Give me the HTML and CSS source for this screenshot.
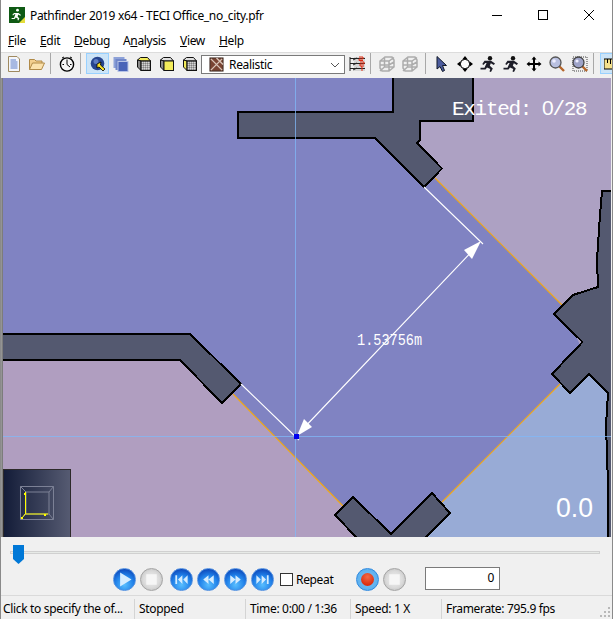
FILE: index.html
```html
<!DOCTYPE html>
<html lang="en">
<head>
<meta charset="utf-8">
<title>Pathfinder 2019 x64 - TECI Office_no_city.pfr</title>
<link rel="stylesheet" href="styles.css">
</head>
<body>
<svg class="defs" aria-hidden="true">
  <defs>
    <pattern id="dither" width="2" height="2" patternUnits="userSpaceOnUse">
      <rect width="2" height="2" fill="#a8a8a8"/>
      <rect width="1" height="1" fill="#d4d4d4"/>
      <rect x="1" y="1" width="1" height="1" fill="#808080"/>
    </pattern>
    <symbol id="wire" viewBox="0 0 16 16">
      <path d="M1 5 L6 1 H13 L15 4 V11 L10 15 H3 L1 12 Z M1 5 H10 L15 1.500 M10 5 V15 M5.500 1 V11 L1 15 M5.500 11 H15 M1 9 L10 9 L15 6" fill="none" stroke="#acacac" stroke-width="1.500"/>
    </symbol>
    <symbol id="runner" viewBox="0 0 16 16">
      <circle cx="10" cy="2.200" r="2.200" fill="#111"/>
      <path d="M4.500 4.800 H11 L15 7.500 L13.800 9 L10.800 7.300 L9.800 9.800 L12.800 12.500 L11 16 L9.500 15.500 L10.300 13 L7 11.400 L5.500 13.500 H.5 V11.800 H4.500 L6.600 7 H5.400 L3.300 9 L2.300 8 Z" fill="#1d1d28"/>
    </symbol>
  </defs>
</svg>
<div class="window">
  <header class="titlebar">
    <svg class="app-icon" viewBox="0 0 16 16">
      <rect width="16" height="16" fill="#0f5a14"/>
      <circle cx="8.500" cy="3.200" r="1.400" fill="#fff"/>
      <path d="M5 6 H9.500 L12 8 L11.200 8.800 L9.300 7.600 L8.600 9.600 L10.400 11.500 L9.300 13.500 L8.400 13 L8.900 11.800 L6.800 10.500 L5.600 12 H2.600 V11 H5 L6.400 7.200 H5.400 L4 8.600 L3.400 7.800 Z" fill="#fff"/>
      <path d="M16 10 V16 H10 Z" fill="#e4dc3a"/>
    </svg>
    <span class="title-text">Pathfinder 2019 x64 - TECI Office_no_city.pfr</span>
    <div class="caption-buttons">
      <svg class="caption" viewBox="0 0 46 30"><path d="M18 15.500 H28" stroke="#000" fill="none"/></svg>
      <svg class="caption" viewBox="0 0 46 30"><rect x="18.500" y="10.500" width="9" height="9" stroke="#000" fill="none"/></svg>
      <svg class="caption" viewBox="0 0 46 30"><path d="M18 10 L28 20 M28 10 L18 20" stroke="#000" fill="none"/></svg>
    </div>
  </header>

  <nav class="menubar">
    <span class="menu menu-file"><u>F</u>ile</span>
    <span class="menu menu-edit"><u>E</u>dit</span>
    <span class="menu menu-debug"><u>D</u>ebug</span>
    <span class="menu menu-analysis">A<u>n</u>alysis</span>
    <span class="menu menu-view"><u>V</u>iew</span>
    <span class="menu menu-help"><u>H</u>elp</span>
  </nav>

  <div class="toolbar">
    <span class="tool"><svg class="ico" viewBox="0 0 16 16"><path d="M2.500 .5 H11 L13.500 3 V15.500 H2.500 Z" fill="#f4f6fb" stroke="#a08a60"/><path d="M4.500 4 H10 M4.500 6 H11.500 M4.500 8 H11.500 M4.500 10 H11.500 M4.500 12 H11.500" stroke="#5a7cc8"/></svg></span>
    <span class="tool"><svg class="ico" viewBox="0 0 16 16"><path d="M.5 13.500 V3.500 H5.500 L7 5 H13 V7" fill="#f3cf8e" stroke="#b08a48"/><path d="M.5 13.500 L3.500 7 H15.500 L12.500 13.500 Z" fill="#fbe2ad" stroke="#b08a48"/></svg></span>
    <span class="sep"></span>
    <span class="tool"><svg class="ico" viewBox="0 0 16 16"><circle cx="8" cy="8.500" r="6.600" fill="#f5f5f5" stroke="#000" stroke-width="1.400"/><path d="M8 3.500 V8.500 L11 11 M3.500 8.500 H5 M11 8.500 H12.500" stroke="#000" fill="none"/><path d="M3 2 L5 1 M13 2 L11 1" stroke="#000"/></svg></span>
    <span class="sep"></span>
    <span class="tool tool-on tool-first-mode"><svg class="ico" viewBox="0 0 16 16"><circle cx="7.500" cy="7.500" r="6.800" fill="#26458f"/><circle cx="6" cy="5.500" r="2.500" fill="#5c7bc4"/><path d="M7 8 L11 6 L10.500 9 L15 13 L13 15 L9 11 L7 12 Z" fill="#f7e22b" stroke="#000" stroke-width=".8"/></svg></span>
    <span class="tool"><svg class="ico" viewBox="0 0 16 16"><rect x=".5" y="1" width="11" height="11" fill="#8ea2d8"/><rect x="2.500" y="3" width="11" height="11" fill="#7187c9"/><rect x="5" y="5.500" width="10" height="10" fill="#4a64b8" stroke="#b8c4e6"/></svg></span>
    <span class="tool"><svg class="ico" viewBox="0 0 16 16"><path class="face-yellow" d="M1.500 4 L4.500 1.500 H11.500 L14.500 5 H5 Z"/><path class="face-dark" d="M1.500 4 L5 5 V14.500 L1.500 11 Z"/><rect class="face-grey" x="5" y="5" width="9.500" height="9.500"/></svg></span>
    <span class="tool"><svg class="ico" viewBox="0 0 16 16"><path class="face-light" d="M1.500 4 L4.500 1.500 H11.500 L14.500 5 H5 Z"/><path class="face-dark" d="M1.500 4 L5 5 V14.500 L1.500 11 Z"/><rect class="face-yellow" x="5" y="5" width="9.500" height="9.500"/></svg></span>
    <span class="tool"><svg class="ico" viewBox="0 0 16 16"><path class="face-light" d="M1.500 4 L4.500 1.500 H11.500 L14.500 5 H5 Z"/><path class="face-yellow" d="M1.500 4 L5 5 V14.500 L1.500 11 Z"/><rect class="face-grey" x="5" y="5" width="9.500" height="9.500"/></svg></span>
    <div class="combo">
      <svg class="combo-ico" viewBox="0 0 16 16"><rect x="1" y="1" width="14" height="14" fill="#7a4433" stroke="#3a2a22"/><path d="M2 2 L14 14 M14 2 L2 14 M8 1 L15 8" stroke="#d9c4b8" stroke-width="1.500"/></svg>
      <span class="combo-text">Realistic</span>
      <svg class="combo-arrow" viewBox="0 0 10 6"><path d="M1 1 L5 5 L9 1" fill="none" stroke="#555"/></svg>
    </div>
    <span class="tool"><svg class="ico" viewBox="0 0 16 16"><rect x="5" y="1" width="11" height="14" fill="#d6d6d6"/><path d="M1 2.500 H16 M1 7.500 H16 M1 12.500 H16 M1 1 V15 M4 4 L8 2 M4 9 L8 7 M4 14 L8 12" stroke="#222" fill="none"/><path d="M10 1 H14 V3 H10 V4.500 H14 M11 6 H15 V8 H11 V10 H15 M12 11 L13 10.500 V15" stroke="#e02a10" fill="none"/></svg></span>
    <span class="sep"></span>
    <span class="tool"><svg class="ico"><use href="#wire"/></svg></span>
    <span class="tool"><svg class="ico"><use href="#wire"/></svg></span>
    <span class="sep sep-wide"></span>
    <span class="tool"><svg class="ico" viewBox="0 0 16 16"><path d="M3 .5 V13 L6 10.500 L8.500 15.500 L10.500 14.500 L8.500 9.500 L12.500 9.500 Z" fill="#4c5c9e" stroke="#101828"/></svg></span>
    <span class="tool"><svg class="ico" viewBox="0 0 16 16"><rect x="3.500" y="3.500" width="9" height="9" rx="4" fill="#fff" stroke="#000"/><path d="M8 0 L10.800 3.500 H5.200 Z M8 16 L10.800 12.500 H5.200 Z M0 8 L3.500 5.200 V10.800 Z M16 8 L12.500 5.200 V10.800 Z" fill="#000"/></svg></span>
    <span class="tool"><svg class="ico"><use href="#runner"/></svg></span>
    <span class="tool"><svg class="ico"><use href="#runner"/></svg></span>
    <span class="tool"><svg class="ico" viewBox="0 0 16 16"><path d="M8 .5 L10.500 3.500 H9 V7 H12.500 V5.500 L15.500 8 L12.500 10.500 V9 H9 V12.500 H10.500 L8 15.500 L5.500 12.500 H7 V9 H3.500 V10.500 L.5 8 L3.500 5.500 V7 H7 V3.500 H5.500 Z" fill="#000"/></svg></span>
    <span class="tool"><svg class="ico" viewBox="0 0 16 16"><path d="M10 10 L15 15" stroke="#b5652a" stroke-width="2.400"/><circle cx="6.500" cy="6.500" r="5.500" fill="#b9c0e0" stroke="#555" stroke-width="1.300"/><circle cx="5" cy="5" r="1.800" fill="#eef"/></svg></span>
    <span class="tool"><svg class="ico" viewBox="0 0 16 16"><rect x="1" y="1" width="14" height="14" fill="none" stroke="#444" stroke-dasharray="1 1"/><path d="M10 10 L15 15" stroke="#b5652a" stroke-width="2.400"/><circle cx="6.500" cy="6.500" r="5.500" fill="#9ea3c8" stroke="#444" stroke-width="1.300"/><circle cx="5" cy="5" r="1.600" fill="#eef"/></svg></span>
    <span class="sep"></span>
    <span class="tool tool-on tool-last"><svg class="ico" viewBox="0 0 16 16"><rect x="0" y="3" width="18" height="10" fill="#f3e08c" stroke="#000"/><path d="M3.500 3 V7 M6.500 3 V8 M9.500 3 V7 M12.500 3 V8" stroke="#000"/></svg></span>
  </div>

  <main class="viewport">
    <svg class="scene" viewBox="3 78 608 459" preserveAspectRatio="none">
      <defs>
        <linearGradient id="axisbg" x1="0" x2="1" y1="0" y2="0">
          <stop offset="0" stop-color="#131c38"/>
          <stop offset="1" stop-color="#565b72"/>
        </linearGradient>
      </defs>
      <rect class="room-lilac" x="3" y="78" width="608" height="459"/>
      <polygon class="room-mauve" points="3,360 180,360 233,394 343,506 356,537 3,537"/>
      <polygon class="room-blue" points="442,502 560,384 590,374 611,393 611,537 426,537"/>
      <polygon class="room-purple" points="3,78 393,78 393,140 435,178 563,306 580,345 560,384 442,502 426,537 356,537 343,506 233,394 225,400 180,360 3,360"/>
      <path class="door" d="M435 178 L563 306 M233 394 L343 506 M442 502 L560 384"/>
      <polygon class="wall" points="393,76 393,112 238,112 238,138 375,138 424,187 442,168.500 417,143 420,140 420,121 473,121 473,76"/>
      <polygon class="wall" points="1,334 190,334 241,384 222,403 180,360 1,360"/>
      <polygon class="wall" points="335,515 353,497 391,534 432,493 450,513 424,539 358,539"/>
      <polygon class="wall" points="613,191 602,191 600,215 597,260 598,287 573,295 554,314 582.500,342 552,374 570,393 589,374 608,393 606,425 608,485 608,539 613,539"/>
      <path class="guide" d="M295.500 78 V537 M3 436.500 H611"/>
      <path class="dim" d="M241 384 L299 440 M424 187 L483 244 M300 432 L478 245"/>
      <polygon class="arrow" points="297,436 304,419 312,427"/>
      <polygon class="arrow" points="481,241 464,250 472,259"/>
      <rect class="pick" x="294" y="434" width="5" height="5"/>
      <text class="label" x="452" y="115">Exited:</text>
      <text class="label" x="542" y="115"><tspan class="plain-zero">0</tspan>/28</text>
      <text class="label label-dim" x="357" y="345" textLength="65" lengthAdjust="spacingAndGlyphs">1.53756m</text>
      <text class="label label-time" x="556" y="517" textLength="37" lengthAdjust="spacingAndGlyphs">0.0</text>
      <rect class="axis-bg" x="3.500" y="469.500" width="67" height="68"/>
      <path class="axis-box" d="M20.500 486.500 H53.500 V519.500 H20.500 Z M26 492 H49 V514 H26 Z M20.500 486.500 L26 492 M53.500 486.500 L49 492 M53.500 519.500 L49 514 M20.500 519.500 L26 514"/>
      <path class="axis-line" d="M25.500 492 V514 H48 M25 514 L22 518"/>
      <rect class="axis-dot" x="24" y="493" width="2" height="2"/>
      <rect class="axis-dot" x="21" y="517" width="2" height="2"/>
      <rect class="axis-dot" x="44" y="514" width="2" height="2"/>
    </svg>
  </main>

  <section class="controls">
    <div class="slider">
      <div class="track"></div>
      <svg class="thumb" viewBox="0 0 11 19"><path d="M0 0 H11 V14 L5.500 19 L0 14 Z"/></svg>
    </div>
    <div class="transport">
      <span class="orb orb-blue orb-play"><svg viewBox="0 0 24 24"><path class="glyph" d="M7 4 L20 12 L7 20 Z"/></svg></span>
      <span class="orb orb-grey orb-stop"><svg viewBox="0 0 24 24"><rect class="glyph" x="6" y="6" width="12" height="12"/></svg></span>
      <span class="orb orb-blue orb-first"><svg viewBox="0 0 24 24"><path class="glyph" d="M5 7 H7 V17 H5 Z M13 7 V17 L8 12 Z M19 7 V17 L14 12 Z"/></svg></span>
      <span class="orb orb-blue"><svg viewBox="0 0 24 24"><path class="glyph" d="M12 7 V17 L6 12 Z M18 7 V17 L12 12 Z"/></svg></span>
      <span class="orb orb-blue"><svg viewBox="0 0 24 24"><path class="glyph" d="M6 7 V17 L12 12 Z M12 7 V17 L18 12 Z"/></svg></span>
      <span class="orb orb-blue"><svg viewBox="0 0 24 24"><path class="glyph" d="M19 7 H17 V17 H19 Z M5 7 V17 L10 12 Z M11 7 V17 L16 12 Z"/></svg></span>
      <label class="repeat"><span class="check"></span>Repeat</label>
      <span class="orb orb-rec"><span class="rec-dot"></span></span>
      <span class="orb orb-grey orb-stop"><svg viewBox="0 0 24 24"><rect class="glyph" x="6" y="6" width="12" height="12"/></svg></span>
      <span class="frame-input">0</span>
    </div>
  </section>

  <footer class="statusbar">
    <span class="cell cell-hint">Click to specify the of...</span>
    <span class="cell cell-state">Stopped</span>
    <span class="cell cell-time">Time: 0:00 / 1:36</span>
    <span class="cell cell-speed">Speed: 1 X</span>
    <span class="cell cell-fps">Framerate: 795.9 fps</span>
    <svg class="grip" viewBox="0 0 12 12"><path d="M9 1h2v2H9z M5 5h2v2H5z M9 5h2v2H9z M1 9h2v2H1z M5 9h2v2H5z M9 9h2v2H9z"/></svg>
  </footer>
</div>
</body>
</html>
```
FILE: styles.css
```css
* { box-sizing: border-box; }
html, body { margin: 0; padding: 0; }
body {
  width: 613px;
  height: 619px;
  overflow: hidden;
  background: #f0f0f0;
  color: #000;
  font-family: "Noto Sans", "Open Sans", sans-serif;
  font-size: 12px;
  letter-spacing: -0.33px;
}
.defs { position: absolute; width: 0; height: 0; }
.window {
  width: 613px;
  height: 619px;
  display: flex;
  flex-direction: column;
  background: #f0f0f0;
  border-left: 1px solid #8a8a8a;
  border-right: 1px solid #8a8a8a;
}

/* title bar */
.titlebar {
  height: 30px;
  flex: none;
  display: flex;
  align-items: center;
  background: #fff;
  padding-left: 8px;
}
.app-icon { width: 16px; height: 16px; flex: none; margin-right: 5px; }
.title-text { white-space: nowrap; }
.caption-buttons { margin-left: auto; display: flex; }
.caption { width: 46px; height: 30px; display: block; }

/* menu */
.menubar {
  height: 22px;
  flex: none;
  display: flex;
  align-items: center;
  background: #fff;
  padding: 0 0 1px 7px;
}
.menu { white-space: nowrap; }
.menu-file { width: 32px; }
.menu-edit { width: 34px; }
.menu-debug { width: 49px; }
.menu-analysis { width: 57px; }
.menu-view { width: 39px; }

/* toolbar */
.toolbar {
  height: 26px;
  flex: none;
  display: flex;
  align-items: flex-start;
  padding-left: 1px;
  background: #f0f0f0;
  border-top: 1px solid #dcdcdc;
  overflow: hidden;
}
.tool {
  width: 23px;
  height: 21px;
  flex: none;
  display: flex;
  align-items: center;
  justify-content: center;
  border: 1px solid transparent;
}
.tool-on { background: #cce4f7; border-color: #99d1ff; }
.tool-first-mode { margin-left: 1px; }
.tool-last { margin-left: 2px; }
.ico { width: 16px; height: 16px; display: block; }
.face-yellow { fill: #f3ec5a; stroke: #111; stroke-width: 1; }
.face-grey { fill: url(#dither); stroke: #111; stroke-width: 1; }
.face-dark { fill: #8a8a8a; stroke: #111; stroke-width: 1; }
.face-light { fill: #e0e0e0; stroke: #111; stroke-width: 1; }
.sep {
  width: 1px;
  height: 21px;
  flex: none;
  margin: 0 4px 0 2px;
  background: #a8a8a8;
}
.sep-wide { margin: 0 4px 0 4px; }
.combo {
  width: 144px;
  height: 19px;
  flex: none;
  margin-top: 2px;
  display: flex;
  align-items: center;
  background: #fff;
  border: 1px solid #7a7a7a;
  padding: 0 4px 0 7px;
}
.combo-ico { width: 15px; height: 15px; flex: none; margin-right: 5px; }
.combo-text { flex: 1; }
.combo-arrow { width: 10px; height: 6px; flex: none; }

/* 3D view */
.viewport {
  height: 459px;
  flex: none;
  padding-left: 2px;
  background: linear-gradient(to right, #a0a0a0, #707070);
  background-size: 2px 100%;
  background-repeat: no-repeat;
  overflow: hidden;
}
.scene { width: 608px; height: 459px; display: block; }
.room-lilac { fill: #ada1c3; }
.room-mauve { fill: #b09ec0; }
.room-blue { fill: #98abd6; }
.room-purple { fill: #8083c2; }
.door { fill: none; stroke: #f0a818; stroke-width: 1.200; }
.wall { fill: #545970; stroke: #000; stroke-width: 2; shape-rendering: crispEdges; }
.guide { fill: none; stroke: #80b8f8; stroke-width: 1; opacity: .75; }
.dim { fill: none; stroke: #fff; stroke-width: 1.100; }
.arrow { fill: #fff; }
.pick { fill: #0000ee; }
.label {
  fill: #fff;
  font-family: "Liberation Mono", monospace;
  font-size: 21px;
  letter-spacing: -1.300px;
  white-space: pre;
}
.plain-zero { font-family: "Liberation Sans", sans-serif; }
.label-dim { font-size: 16px; letter-spacing: 0; }
.label-time { font-family: "Liberation Sans", sans-serif; font-size: 27px; letter-spacing: 0; }
.axis-bg { fill: url(#axisbg); stroke: #2d2a2a; stroke-width: 1; }
.axis-box { fill: none; stroke: #7c8196; stroke-width: 1; }
.axis-line { fill: none; stroke: #ffff00; stroke-width: 1; }
.axis-dot { fill: #ffff00; }

/* playback */
.controls {
  height: 58px;
  flex: none;
  display: flex;
  flex-direction: column;
}
.slider {
  height: 30px;
  flex: none;
  position: relative;
  padding: 14px 12px 0 9px;
}
.track {
  height: 3px;
  background: #e7eae7;
  border: 1px solid #d0d0d0;
}
.thumb {
  position: absolute;
  left: 12px;
  top: 8px;
  width: 11px;
  height: 19px;
  fill: #0078d7;
}
.transport {
  display: flex;
  align-items: center;
  padding-left: 112px;
  height: 24px;
}
.orb {
  width: 23px;
  height: 23px;
  flex: none;
  margin-right: 4px;
  border-radius: 50%;
  display: flex;
  align-items: center;
  justify-content: center;
}
.orb svg { width: 21px; height: 21px; display: block; }
.orb-stop { margin-right: 7px; }
.orb-blue {
  background: radial-gradient(circle at 50% 75%, #58beff 0%, #1f7fe8 50%, #0c45b8 85%, #0b3d9e 100%);
  border: 1px solid #4f8fe0;
}
.orb-grey {
  background: radial-gradient(circle at 50% 50%, #f2f2f2 0%, #dadada 55%, #b4b4b4 100%);
  border: 1px solid #a4a4a4;
}
.orb-grey .glyph { fill: #f6f6f6; }
.orb-rec {
  background: radial-gradient(circle at 50% 50%, #7fc4f4 0%, #5cb0ee 70%, #2b80d8 100%);
  border: 1px solid #2f8ae0;
}
.rec-dot {
  width: 13px;
  height: 13px;
  border-radius: 50%;
  background: radial-gradient(circle at 50% 30%, #f26a45, #dd2f10 70%);
}
.glyph { fill: #d5ecff; }
.repeat {
  display: flex;
  align-items: center;
  width: 76px;
  margin-left: 2px;
}
.check {
  width: 13px;
  height: 13px;
  flex: none;
  margin-right: 3px;
  background: #fff;
  border: 1px solid #333;
}
.frame-input {
  width: 75px;
  height: 23px;
  flex: none;
  margin: 0 0 2px 12px;
  padding: 0 5px;
  background: #fff;
  border: 1px solid #7a7a7a;
  line-height: 19px;
  text-align: right;
}

/* status bar */
.statusbar {
  height: 24px;
  flex: none;
  display: flex;
  align-items: center;
  position: relative;
  border-top: 1px solid #dadada;
  padding-top: 2px;
}
.cell {
  height: 20px;
  line-height: 20px;
  flex: none;
  white-space: nowrap;
  border-right: 1px solid #d4d4d4;
  padding-left: 4px;
}
.cell-hint { width: 134px; padding-left: 2px; }
.cell-state { width: 111px; }
.cell-time { width: 105px; }
.cell-speed { width: 91px; }
.cell-fps { border-right: 0; }
.grip { position: absolute; right: 1px; bottom: 1px; width: 12px; height: 12px; fill: #b8b8b8; }
```
